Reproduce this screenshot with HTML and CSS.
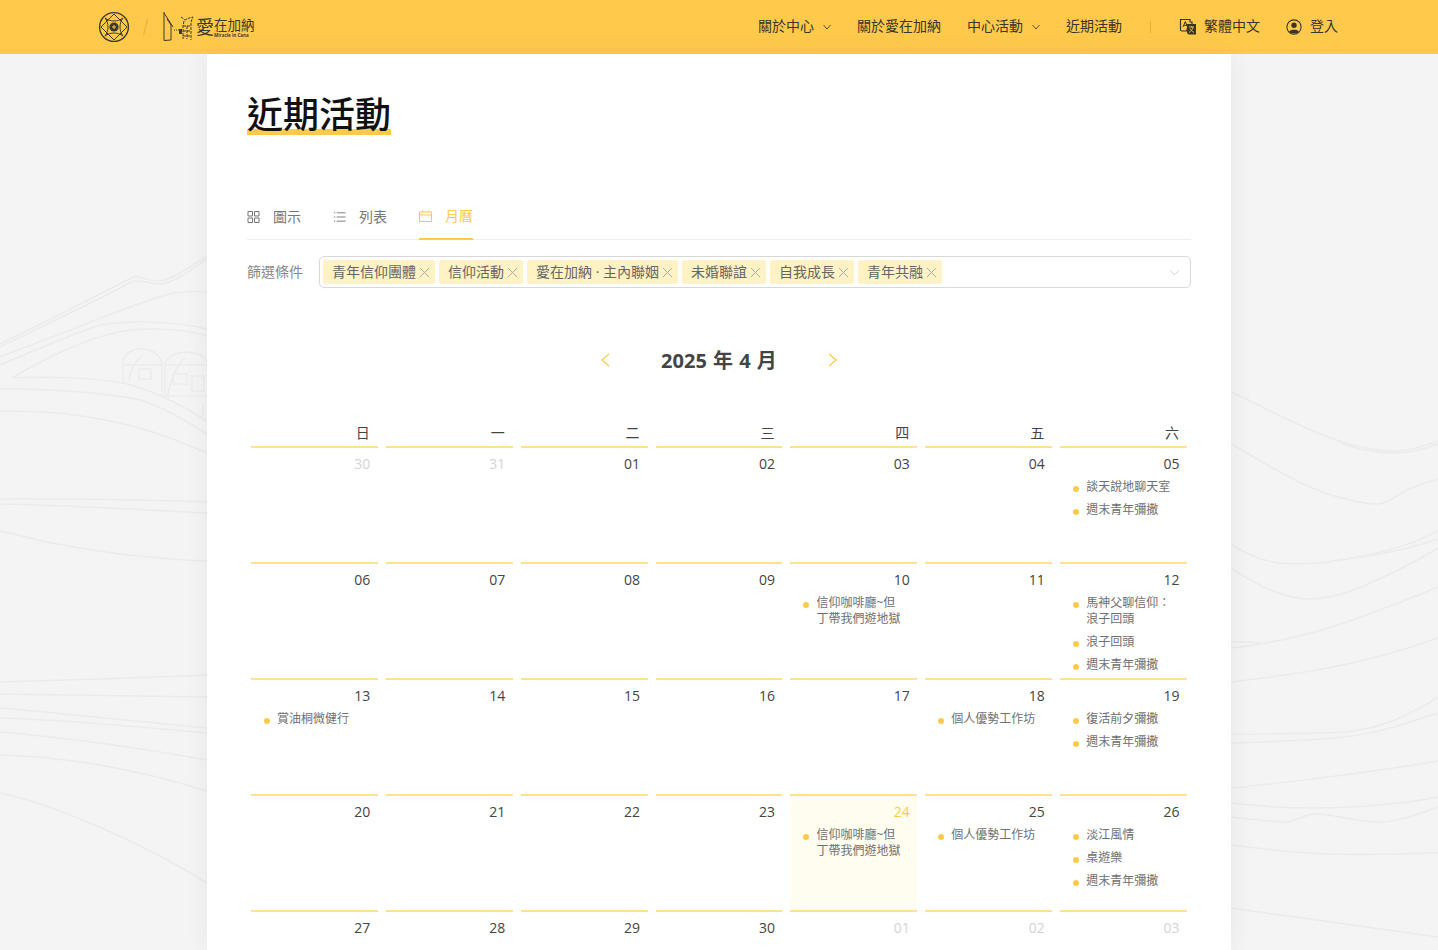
FILE: index.html
```html
<!DOCTYPE html>
<html lang="zh-Hant">
<head>
  <meta charset="UTF-8">
  <meta name="viewport" content="width=device-width, initial-scale=1.0">
  <title>近期活動</title>
  <link rel="stylesheet" href="styles.css">
</head>
<body>
  <!-- faint line drawing behind the page -->
  <svg class="backdrop" viewBox="0 0 1438 950" fill="none" stroke="#ebebeb" stroke-width="1.5">
    <path d="M0 344C45 322 95 297 133 277C140 275 148 281 157 281C170 281 185 270 207 256"/>
    <path d="M0 347C45 325 95 302 133 281C142 280 150 284 160 284C175 283 190 270 207 259"/>
    <path d="M0 357C60 335 130 305 165 295C180 291 195 291 207 292"/>
    <path d="M0 365C35 350 75 333 100 325C125 320 175 321 207 329"/>
    <path d="M12 378C40 361 85 338 123 331C150 327 185 329 207 336"/>
    <path d="M12 378C50 376 95 378 123 383C150 389 180 404 207 421"/>
    <path d="M0 389C40 389 75 391 100 394C120 396 135 398 143 401C165 408 190 423 207 434"/>
    <path d="M0 411C25 411 50 412 67 414C100 418 130 425 150 431C175 439 195 448 207 453"/>
    <path d="M0 499C70 498 140 500 207 502"/>
    <path d="M0 504C70 505 140 510 207 513"/>
    <path d="M0 531C20 535 30 538 37 540C90 551 150 559 207 561"/>
    <path d="M0 682C70 680 140 678 207 675"/>
    <path d="M0 694C70 695 140 696 207 697"/>
    <path d="M0 708C70 714 140 722 207 728"/>
    <path d="M0 718C70 720 140 727 207 733"/>
    <path d="M0 732C70 738 140 748 207 760"/>
    <path d="M0 755C35 756 70 760 100 765C140 772 175 781 207 791"/>
    <path d="M0 793C35 800 70 815 100 827C140 845 175 863 207 883"/>
    <path d="M123 384V362C123 354 132 349 142 349C153 349 162 356 162 366V396M123 365H162M129 382C130 370 134 362 142 356"/>
    <path d="M139 369H151V379H139Z"/>
    <path d="M165 396V366C165 357 175 352 187 352C197 352 205 357 207 362M165 365H207M168 396C170 380 176 365 185 358M173 374H187V384H173ZM192 376H204V391H192ZM165 396H207M203 404V417"/>

    <path d="M1231 392C1265 407 1295 425 1328 437C1350 445 1375 451 1395 451C1410 451 1425 446 1438 441"/>
    <path d="M1340 443C1360 450 1380 453 1395 453C1410 453 1425 449 1438 444"/>
    <path d="M1231 444C1265 463 1295 483 1328 494C1350 501 1365 504 1378 504C1390 503 1395 496 1405 491C1415 486 1428 482 1438 479"/>
    <path d="M1231 544C1245 554 1260 560 1278 563C1300 565 1315 563 1328 562C1365 557 1405 549 1438 531"/>
    <path d="M1330 561C1370 557 1410 549 1438 539"/>
    <path d="M1231 568C1245 577 1260 587 1278 593C1290 597 1300 599 1311 599C1330 598 1345 594 1361 587C1385 577 1415 562 1438 548"/>
    <path d="M1231 648C1255 645 1275 642 1295 637C1320 631 1340 625 1361 617C1385 608 1415 597 1438 587"/>
    <path d="M1231 642C1240 642 1250 642 1261 643"/>
    <path d="M1231 682C1265 678 1295 674 1328 668C1365 661 1405 650 1438 638"/>
    <path d="M1231 734C1270 734 1310 734 1345 732C1365 730 1380 726 1395 720C1410 713 1425 706 1438 697"/>
    <path d="M1231 743C1270 742 1310 740 1345 737C1380 733 1410 722 1438 713"/>
    <path d="M1231 788C1265 785 1295 781 1328 777C1365 772 1405 767 1438 761"/>
    <path d="M1231 803C1255 806 1285 808 1311 808C1335 808 1360 807 1378 805C1400 803 1420 801 1438 797"/>
    <path d="M1231 817C1250 819 1270 822 1285 822C1295 822 1305 814 1315 814C1335 814 1355 822 1378 822C1400 822 1420 813 1438 807"/>
    <path d="M1231 845C1265 849 1295 853 1328 854C1365 855 1405 854 1438 853"/>
    <path d="M1231 908L1438 937"/>
  </svg>

  <header class="topbar">
    <div class="brand">
      <svg class="brand-seal" viewBox="0 0 32 32" fill="none" stroke="#3d3a2a">
        <circle cx="16" cy="16" r="14.400" stroke-width="1.400"/>
        <path d="M16 3L29 16L16 29L3 16Z" stroke-width="1"/>
        <path d="M7 7C12 11 20 11 25 7C21 12 21 20 25 25C20 21 12 21 7 25C11 20 11 12 7 7Z" stroke-width="1"/>
        <circle cx="16" cy="16" r="4.600" fill="#3d3a2a" stroke="none"/>
        <path d="M14 16H18M16 14V18" stroke="#ffca4b" stroke-width="1"/>
      </svg>
      <span class="brand-slash"></span>
      <svg class="brand-figure" viewBox="0 0 32 30" fill="none" stroke="#3d3a2a" stroke-width="1">
        <path d="M1 0V28.500L8 28V13M1 1L10 15M8 13L4 7"/>
        <path d="M11 18H16" stroke-dasharray="1 1"/>
        <path d="M16 17H19V22H16Z" fill="#3d3a2a" stroke="none"/>
        <path d="M18 5L22 8L26 6L30 5L28 10V28M21 9L20 14V27M20 14H28M20 19H28M20 24H28M24 14V27" stroke-dasharray="3 1"/>
      </svg>
      <div class="brand-name">
        <span class="brand-love">愛</span>
        <div class="brand-words">
          <span class="brand-zh">在加納</span>
          <span class="brand-en">Miracle in Cana</span>
        </div>
      </div>
    </div>
    <nav class="nav">
      <a class="nav-item">關於中心<svg class="caret" viewBox="0 0 8 6"><path d="M.5 1L4 5L7.500 1"/></svg></a>
      <a class="nav-item">關於愛在加納</a>
      <a class="nav-item">中心活動<svg class="caret" viewBox="0 0 8 6"><path d="M.5 1L4 5L7.500 1"/></svg></a>
      <a class="nav-item">近期活動</a>
      <span class="nav-sep"></span>
      <a class="nav-item">
        <svg class="nav-icon" viewBox="0 0 18 18">
          <path d="M1.500 1.500H11V4H13V11H8V13H3A1.500 1.500 0 0 1 1.500 11.500Z" fill="none" stroke="#3a3524" stroke-width="1.200"/>
          <path d="M8 6H17V16.500H9.500L8 15Z" fill="#3a3524"/>
          <path d="M10 9H15M12.500 8V9M14 9C13.500 11.500 12 13.500 10 14.500M11 10.500C11.800 12 13.200 13.500 15 14.500" fill="none" stroke="#ffca4b" stroke-width="0.900"/>
          <path d="M4 9L6.300 3.500L8.500 9M4.900 7.300H7.700" fill="none" stroke="#3a3524" stroke-width="1"/>
        </svg>繁體中文</a>
      <a class="nav-item nav-login">
        <svg class="nav-icon user-icon" viewBox="0 0 18 18">
          <circle cx="9" cy="9" r="8" fill="none" stroke="#3a3524" stroke-width="1.200"/>
          <circle cx="9" cy="7" r="3" fill="#3a3524"/>
          <path d="M3.500 14C5 11.500 13 11.500 14.500 14C13 16.800 5 16.800 3.500 14Z" fill="#3a3524"/>
        </svg>登入</a>
    </nav>
  </header>

  <main class="sheet">
    <h1 class="page-title">近期活動</h1>

    <div class="tabs">
      <a class="tab">
        <svg class="tab-icon" viewBox="-.5 0 13 12"><path d="M.5 .5H5V5H.5ZM7 .5H11.500V5H7ZM.5 7H5V11.500H.5ZM7 7H11.500V11.500H7Z"/></svg>圖示
      </a>
      <a class="tab">
        <svg class="tab-icon" viewBox="0 0 14 12"><path d="M4 1.500H13.500M4 6H13.500M4 10.500H13.500M1 1.500H2.500M1 6H2.500M1 10.500H2.500"/></svg>列表
      </a>
      <a class="tab tab-active">
        <svg class="tab-icon" viewBox="0 0 13 12"><path d="M.5 2H12.500V11.500H.5ZM.5 5H12.500M3.500 .5V2M9.500 .5V2"/></svg>月曆
      </a>
    </div>

    <div class="filter">
      <label class="filter-label">篩選條件</label>
      <div class="filter-box">
        <span class="chip">青年信仰團體<i class="chip-x"></i></span>
        <span class="chip">信仰活動<i class="chip-x"></i></span>
        <span class="chip">愛在加納 · 主內聯姻<i class="chip-x"></i></span>
        <span class="chip">未婚聯誼<i class="chip-x"></i></span>
        <span class="chip">自我成長<i class="chip-x"></i></span>
        <span class="chip">青年共融<i class="chip-x"></i></span>
        <svg class="filter-caret" viewBox="0 0 12 7"><path d="M1 1L6 6L11 1"/></svg>
      </div>
    </div>

    <div class="month-bar">
      <svg class="month-arrow" viewBox="0 0 10 14"><path d="M9 1L2 7L9 13"/></svg>
      <h2 class="month-name">2025 年 4 月</h2>
      <svg class="month-arrow" viewBox="0 0 10 14"><path d="M1 1L8 7L1 13"/></svg>
    </div>

    <div class="calendar">
      <div class="weekday">日</div>
      <div class="weekday">一</div>
      <div class="weekday">二</div>
      <div class="weekday">三</div>
      <div class="weekday">四</div>
      <div class="weekday">五</div>
      <div class="weekday">六</div>

      <div class="day other"><div class="num">30</div></div>
      <div class="day other"><div class="num">31</div></div>
      <div class="day"><div class="num">01</div></div>
      <div class="day"><div class="num">02</div></div>
      <div class="day"><div class="num">03</div></div>
      <div class="day"><div class="num">04</div></div>
      <div class="day"><div class="num">05</div>
        <div class="event">談天說地聊天室</div>
        <div class="event">週末青年彌撒</div>
      </div>

      <div class="day"><div class="num">06</div></div>
      <div class="day"><div class="num">07</div></div>
      <div class="day"><div class="num">08</div></div>
      <div class="day"><div class="num">09</div></div>
      <div class="day"><div class="num">10</div>
        <div class="event">信仰咖啡廳~但丁帶我們遊地獄</div>
      </div>
      <div class="day"><div class="num">11</div></div>
      <div class="day"><div class="num">12</div>
        <div class="event">馬神父聊信仰：浪子回頭</div>
        <div class="event">浪子回頭</div>
        <div class="event">週末青年彌撒</div>
      </div>

      <div class="day"><div class="num">13</div>
        <div class="event">賞油桐微健行</div>
      </div>
      <div class="day"><div class="num">14</div></div>
      <div class="day"><div class="num">15</div></div>
      <div class="day"><div class="num">16</div></div>
      <div class="day"><div class="num">17</div></div>
      <div class="day"><div class="num">18</div>
        <div class="event">個人優勢工作坊</div>
      </div>
      <div class="day"><div class="num">19</div>
        <div class="event">復活前夕彌撒</div>
        <div class="event">週末青年彌撒</div>
      </div>

      <div class="day"><div class="num">20</div></div>
      <div class="day"><div class="num">21</div></div>
      <div class="day"><div class="num">22</div></div>
      <div class="day"><div class="num">23</div></div>
      <div class="day today"><div class="num">24</div>
        <div class="event">信仰咖啡廳~但丁帶我們遊地獄</div>
      </div>
      <div class="day"><div class="num">25</div>
        <div class="event">個人優勢工作坊</div>
      </div>
      <div class="day"><div class="num">26</div>
        <div class="event">淡江風情</div>
        <div class="event">桌遊樂</div>
        <div class="event">週末青年彌撒</div>
      </div>

      <div class="day"><div class="num">27</div></div>
      <div class="day"><div class="num">28</div></div>
      <div class="day"><div class="num">29</div></div>
      <div class="day"><div class="num">30</div></div>
      <div class="day other"><div class="num">01</div></div>
      <div class="day other"><div class="num">02</div></div>
      <div class="day other"><div class="num">03</div></div>
    </div>
  </main>
</body>
</html>
```

FILE: styles.css
```css
body {
  margin: 0;
  height: 950px;
  overflow: hidden;
  background-color: #f4f4f4;
  font-family: "Open Sans", "Noto Sans CJK TC", sans-serif;
  font-size: 14px;
  color: #444;
  position: relative;
}

.backdrop {
  position: absolute;
  left: 0;
  top: 0;
  width: 1438px;
  height: 950px;
}

/* top bar */
.topbar {
  position: relative;
  height: 54px;
  background-color: #ffca4b;
  display: flex;
  align-items: center;
  justify-content: space-between;
  padding: 0 100px 0 98px;
}

.brand {
  display: flex;
  align-items: center;
}

.brand-seal {
  width: 32px;
  height: 32px;
}

.brand-slash {
  width: 1px;
  height: 16px;
  margin: 0 17px 0 15px;
  background-color: #e0ad3c;
  transform: rotate(14deg);
}

.brand-figure {
  width: 32px;
  height: 30px;
}

.brand-name {
  display: flex;
  align-items: center;
  margin-left: 1px;
  color: #3d3a2a;
}

.brand-love {
  font-size: 18px;
  line-height: 20px;
}

.brand-words {
  display: flex;
  flex-direction: column;
  margin-top: 2px;
}

.brand-zh {
  font-size: 13.500px;
  line-height: 13px;
}

.brand-en {
  font-size: 4.500px;
  line-height: 6px;
  font-weight: 700;
  white-space: nowrap;
}

.nav {
  display: flex;
  align-items: center;
  margin-top: -4px;
  color: #3a3524;
  font-size: 14px;
  font-family: "Noto Sans CJK TC", sans-serif;
}

.nav-item {
  display: flex;
  align-items: center;
  margin-right: 26px;
  white-space: nowrap;
}

.caret {
  width: 8px;
  height: 6px;
  margin: 4px 0 0 9px;
  fill: none;
  stroke: #5d5430;
  stroke-width: 1;
}

.nav-sep {
  width: 1px;
  height: 12px;
  margin: 4px 28px 0 2px;
  background-color: #dfae3e;
}

.nav-icon {
  width: 18px;
  height: 18px;
  margin: 4px 7px 0 0;
}

.user-icon {
  width: 16px;
  height: 16px;
  margin-right: 8px;
}

.nav-login {
  margin-right: 0;
}

/* white sheet */
.sheet {
  position: relative;
  width: 944px;
  height: 896px;
  margin: 0 auto;
  padding: 0 40px;
  background-color: #fff;
  box-shadow: 0 0 24px rgba(0, 0, 0, 0.06);
}

.page-title {
  width: fit-content;
  margin: 0;
  padding-top: 41px;
  font-size: 36px;
  line-height: 40px;
  font-weight: 500;
  color: #111;
  background: linear-gradient(#ffca4b, #ffca4b) left bottom / 100% 6px no-repeat;
}

.tabs {
  display: flex;
  gap: 32px;
  margin-top: 65px;
  height: 39px;
  border-bottom: 1px solid #eee;
}

.tab {
  display: flex;
  align-items: center;
  box-sizing: border-box;
  height: 40px;
  padding-bottom: 8px;
  color: #777;
  font-size: 14px;
  font-family: "Noto Sans CJK TC", sans-serif;
}

.tab-icon {
  width: 13px;
  height: 12px;
  margin: 2px 13px 0 0;
  fill: none;
  stroke: #777;
  stroke-width: 1;
}

.tab-active {
  color: #ffca4b;
  border-bottom: 2px solid #ffca4b;
}

.tab-active .tab-icon {
  stroke: #ffca4b;
}

.filter {
  display: flex;
  align-items: center;
  margin-top: 16px;
}

.filter-label {
  width: 72px;
  padding-bottom: 2px;
  color: #888;
  font-size: 14px;
}

.filter-box {
  flex: 1;
  display: flex;
  align-items: center;
  gap: 4px;
  box-sizing: border-box;
  height: 32px;
  padding: 0 3px;
  border: 1px solid #d9d9d9;
  border-radius: 5px;
}

.chip {
  display: flex;
  align-items: center;
  box-sizing: border-box;
  height: 24px;
  padding: 0 6px 2px 9px;
  border-radius: 3px;
  background-color: #fff2c4;
  color: #666;
  font-size: 14px;
  white-space: nowrap;
}

.chip-x {
  width: 9px;
  height: 9px;
  margin: 2px 0 0 4px;
  background:
    linear-gradient(45deg, transparent 46%, #aaa 46%, #aaa 54%, transparent 54%),
    linear-gradient(-45deg, transparent 46%, #aaa 46%, #aaa 54%, transparent 54%);
}

.filter-caret {
  width: 11px;
  height: 7px;
  margin: 0 7px 0 auto;
  fill: none;
  stroke: #ccc;
  stroke-width: 1;
}

/* month switcher */
.month-bar {
  display: flex;
  justify-content: center;
  align-items: center;
  gap: 51px;
  margin-top: 57px;
  height: 30px;
}

.month-arrow {
  width: 10px;
  height: 14px;
  fill: none;
  stroke: #ffca4b;
  stroke-width: 1.300;
}

.month-name {
  margin: 0 0 2px;
  font-size: 20px;
  font-weight: 700;
  word-spacing: 1px;
  color: #444;
}

/* calendar */
.calendar {
  display: grid;
  grid-template-columns: repeat(7, 1fr);
  margin-top: 43px;
}

.weekday {
  margin: 0 4px;
  padding-right: 8px;
  height: 28px;
  line-height: 30px;
  text-align: right;
  font-size: 14px;
  color: #444;
}

.day {
  box-sizing: border-box;
  height: 116px;
  margin: 0 4px;
  padding: 6px 7.500px 0 13px;
  border-top: 2px solid #ffe28f;
}

.num {
  height: 20px;
  line-height: 20px;
  text-align: right;
  font-size: 14px;
  color: #444;
}

.other .num {
  color: #d4d4d4;
}

.today {
  background-color: #fffdf0;
}

.today .num {
  color: #ffca4b;
}

.event {
  position: relative;
  margin-top: 5px;
  margin-bottom: 7px;
  padding-left: 13px;
  max-width: 86px;
  font-size: 12px;
  line-height: 16px;
  color: #707070;
}

.event + .event {
  margin-top: 0;
}

.event::before {
  content: "";
  position: absolute;
  left: 0;
  top: 7px;
  width: 6px;
  height: 6px;
  border-radius: 50%;
  background-color: #ffca4b;
}
```
